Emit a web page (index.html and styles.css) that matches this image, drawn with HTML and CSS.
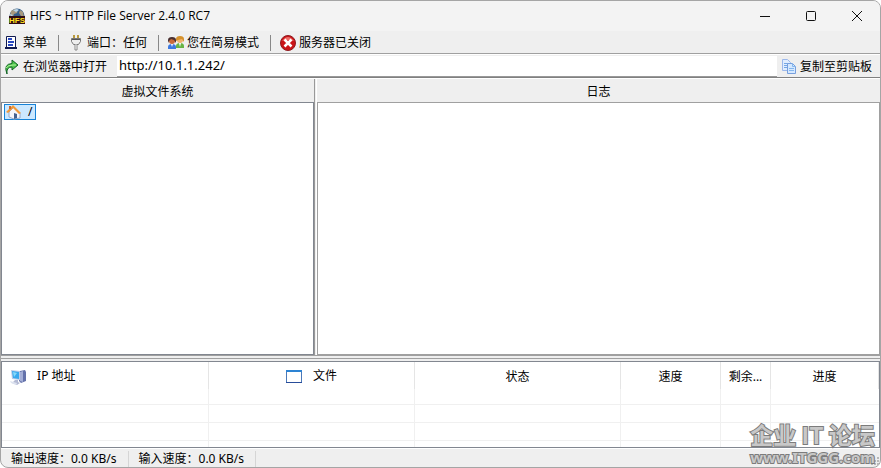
FILE: index.html
```html
<!DOCTYPE html>
<html lang="zh-CN">

<head>
    <meta charset="utf-8">
    <title>HFS ~ HTTP File Server 2.4.0 RC7</title>
    <meta name="viewport" content="width=device-width, initial-scale=1.0">
    <link rel="stylesheet" href="styles.css">
</head>

<body>
    <div class="window">
        <header class="titlebar">
            <svg width="18" height="16" viewBox="0 0 18 16">
                <circle cx="9" cy="8" r="7.500" fill="#35608c" />
                <path d="M3 3l4-2 3 1-1 3-3 1-1 3-3-1zM12 2l3 2 1 5-3-1-2-3z" fill="#a8997f" />
                <path d="M5 2l4-1 2 1-3 2zM2 6l3 1-2 2z" fill="#b7d5ed" />
                <path d="M1 8h16v8H1z" fill="#300c14" />
                <text x="9" y="15" text-anchor="middle" font-family="Liberation Sans, sans-serif" font-size="8" font-weight="bold" fill="#ffe020">HFS</text>
            </svg>
            <h1>HFS ~ HTTP File Server 2.4.0 RC7</h1>
            <div class="controls">
                <button type="button" aria-label="最小化"><svg width="12" height="12" viewBox="0 0 12 12"><path d="M1 6.500h10" /></svg></button>
                <button type="button" aria-label="最大化"><svg width="12" height="12" viewBox="0 0 12 12"><rect x="1.500" y="1.500" width="9" height="9" rx="1" /></svg></button>
                <button type="button" aria-label="关闭"><svg width="12" height="12" viewBox="0 0 12 12"><path d="M1 1l10 10M11 1L1 11" /></svg></button>
            </div>
        </header>

        <nav class="toolbar">
            <button type="button">
                <svg width="16" height="16" viewBox="0 0 16 16">
                    <path d="M2.500 1.500h9v11h-9z" fill="#fff" stroke="#111a50" />
                    <path d="M4 4h4M4 7h6M4 10h5" stroke="#2848c0" stroke-width="2" />
                    <path d="M1 13h12" stroke="#111a50" stroke-width="2" />
                </svg>
                菜单
            </button>
            <button type="button">
                <svg width="16" height="16" viewBox="0 0 16 16">
                    <path d="M6 0v4M10 0v4" stroke="#b99a3e" stroke-width="2" />
                    <path d="M3.500 3.500h9v3l-2 3h-5l-2-3z" fill="#eee" stroke="#777" />
                    <path d="M4 4h8v1H4z" fill="#555" />
                    <path d="M7 9.500v5.500h2V9.500" fill="#fff" stroke="#888" />
                </svg>
                端口：任何
            </button>
            <button type="button">
                <svg width="16" height="16" viewBox="0 0 16 16">
                    <path d="M0 14v-2q0-3 4-3t4 3v2z" fill="#3d79df" />
                    <path d="M8 13v-2q0-3 4-3t4 3v2z" fill="#68b445" />
                    <circle cx="4" cy="6" r="3" fill="#c86a3b" />
                    <path d="M0 8V5q0-3 4-3t4 3v3l-2-3-3-1-2 2z" fill="#4a3030" />
                    <circle cx="12" cy="5" r="3" fill="#f1b36d" />
                    <path d="M8 6V4q0-3 4-3t4 3v3l-2-3-4 1z" fill="#d6922c" />
                    <path d="M3 9l1 3 1-3M11 8l1 4 1-4" fill="#fff" />
                </svg>
                您在简易模式
            </button>
            <button type="button">
                <svg width="16" height="16" viewBox="0 0 16 16">
                    <circle cx="8" cy="8" r="7.500" fill="#ca1418" stroke="#8f1b20" />
                    <path d="M2 6q6-8 12 0-6-2-12 0z" fill="#ed6a66" />
                    <path d="M4.500 4.500l7 7M11.500 4.500l-7 7" stroke="#fff" stroke-width="2.500" />
                </svg>
                服务器已关闭
            </button>
        </nav>

        <div class="address">
            <button type="button">
                <svg width="16" height="16" viewBox="0 0 16 16">
                    <path d="M3 15Q-1 5 8 4.500V1l6 5-6 5V8Q2 8 3 15z" fill="#4cc44b" stroke="#126324" />
                    <path d="M2 9q2-3 7-3l3 0" fill="none" stroke="#b2f09f" />
                </svg>
                在浏览器中打开
            </button>
            <input type="text" value="http://10.1.1.242/" aria-label="URL">
            <button type="button">
                <svg width="16" height="16" viewBox="0 0 16 16">
                    <path d="M1.500.500h5l3 3v8h-8z" fill="#e0edff" stroke="#9cb8eb" />
                    <path d="M3 4.500h4M3 6.500h4M3 8.500h4" stroke="#75a7e5" />
                    <path d="M6.500 4.500h5l3 3v7h-8z" fill="#d5e8ff" stroke="#779fdd" />
                    <path d="M11.500 4.500v3h3M8 9.500h5M8 11.500h5" fill="none" stroke="#84b7ed" />
                </svg>
                复制至剪贴板
            </button>
        </div>

        <main class="panels">
            <section class="panel files">
                <h2>虚拟文件系统</h2>
                <div class="pane">
                    <a href="#" class="node">
                        <svg width="16" height="16" viewBox="0 0 16 16">
                            <path d="M3 8l5-5 6 6v5l-6 1-5-2z" fill="#f5f6fb" stroke="#99a8c6" />
                            <path d="M0 8l7-7 8 8-2 1-6-6-5 5z" fill="#f39a38" />
                            <path d="M3 2h2v3H3z" fill="#cc6930" />
                            <path d="M8 9l3 1v4l-3 1z" fill="#46628e" />
                        </svg>
                        <span>/</span>
                    </a>
                </div>
            </section>
            <section class="panel log">
                <h2>日志</h2>
                <div class="pane"></div>
            </section>
        </main>

        <div class="connections">
            <table>
                <colgroup>
                    <col class="ip">
                    <col class="file">
                    <col class="status">
                    <col class="speed">
                    <col class="left">
                    <col>
                </colgroup>
                <thead>
                    <tr>
                        <th class="first">
                            <svg width="16" height="16" viewBox="0 0 16 16">
                                <path d="M10 2l5-1 1 2v9l-5 2-2-2z" fill="#6472aa" />
                                <path d="M10 3l3-1v11l-3-1z" fill="#a4aed6" />
                                <path d="M1 1l9 1v9l-8-1z" fill="#bacae8" />
                                <path d="M2 2l7 1v7l-6-1z" fill="#39a9ee" />
                                <path d="M3 3l4 1-3 4z" fill="#86d8fa" />
                                <path d="M5 11l3 0v2l2 1-3 2-5-2z" fill="#b4bad4" />
                                <path d="M0 12l7 2-1 2-5-2z" fill="#dce2ef" />
                            </svg>
                            IP 地址
                        </th>
                        <th>
                            <svg width="16" height="16" viewBox="0 0 16 16">
                                <path d="M.500 1.500h15v12H.500z" fill="#fff" stroke="#4b79b9" />
                                <path d="M0 2h16" stroke="#2d83d3" stroke-width="2" />
                                <path d="M0 13.500h16" stroke="#294d9a" />
                            </svg>
                            文件
                        </th>
                        <th>状态</th>
                        <th>速度</th>
                        <th>剩余...</th>
                        <th>进度</th>
                    </tr>
                </thead>
                <tbody>
                    <tr><td></td><td></td><td></td><td></td><td></td><td></td></tr>
                    <tr><td></td><td></td><td></td><td></td><td></td><td></td></tr>
                    <tr><td></td><td></td><td></td><td></td><td></td><td></td></tr>
                    <tr class="rest"><td></td><td></td><td></td><td></td><td></td><td></td></tr>
                </tbody>
            </table>
        </div>

        <footer class="statusbar">
            <span>输出速度：0.0 KB/s</span>
            <span>输入速度：0.0 KB/s</span>
            <svg class="grip" width="10" height="10" viewBox="0 0 10 10">
                <path d="M7 0h2v2H7zM4 3h2v2H4zM7 3h2v2H7zM1 6h2v2H1zM4 6h2v2H4zM7 6h2v2H7z" fill="#b8b8b8" />
            </svg>
        </footer>

        <div class="watermark">
            <p class="forum">企业 IT 论坛</p>
            <p class="site">www.ITGGG.com</p>
        </div>
    </div>
</body>

</html>
```

FILE: styles.css
```css
* {
    box-sizing: border-box;
}

body {
    margin: 0;
    background-color: #fff;
    color: #000;
    font-family: "Noto Sans", "Noto Sans CJK SC", sans-serif;
    font-size: 12px;
    line-height: 16px;
}

svg {
    flex: none;
}

button {
    display: flex;
    align-items: center;
    gap: 3px;
    padding: 0;
    border: 0;
    background: none;
    color: inherit;
    font: inherit;
    white-space: nowrap;
}

h1,
h2,
p {
    margin: 0;
    font-size: 12px;
    font-weight: normal;
}

.window {
    position: relative;
    display: flex;
    flex-direction: column;
    min-height: 100vh;
    border: 1px solid #a5a5a5;
    border-radius: 8px;
    background-color: #efefef;
    overflow: hidden;
}

.titlebar {
    display: flex;
    align-items: center;
    height: 30px;
    padding-left: 7px;
    background-color: #f3f3f3;
}

.titlebar h1 {
    margin-left: 4px;
    font-family: "Open Sans", sans-serif;
}

.controls {
    display: flex;
    margin-left: auto;
}

.controls button {
    justify-content: center;
    width: 46px;
    height: 28px;
}

.controls svg {
    fill: none;
    stroke: #111;
}

.toolbar {
    display: flex;
    align-items: center;
    height: 23px;
    padding: 2px 0 0 3px;
    border-bottom: 1px solid #a0a0a0;
}

.toolbar button {
    height: 16px;
    padding-right: 11px;
}

.toolbar button + button {
    padding-left: 9px;
    border-left: 1px solid #888;
}

.address {
    display: flex;
    align-items: center;
    height: 24px;
    padding: 1px 8px 0 3px;
    border-top: 1px solid #fff;
    border-bottom: 1px solid #808080;
}

.address input {
    flex: 1;
    min-width: 0;
    height: 21px;
    margin: 0 4px 0 10px;
    padding: 0 2px 2px;
    border: 0;
    border-bottom: 1px solid #999;
    background-color: #fff;
    color: #000;
    font-family: "Noto Sans", sans-serif;
    font-size: 13px;
}

.panels {
    display: flex;
    flex: 1;
    gap: 1px;
    border-top: 1px solid #fff;
    border-bottom: 1px solid #a0a0a0;
}

.panel {
    display: flex;
    flex-direction: column;
}

.files {
    flex: 5;
    border-right: 1px solid #999;
}

.log {
    flex: 9;
    border-left: 1px solid #fff;
}

.panel h2 {
    padding: 5px 0 2px;
    text-align: center;
}

.pane {
    flex: 1;
    border: 1px solid #828790;
    background-color: #fff;
}

.log .pane {
    border-color: #a0a0a0;
}

.node {
    display: inline-flex;
    align-items: center;
    gap: 6px;
    height: 16px;
    margin: 1px 0 0 2px;
    padding: 0 3px 0 1px;
    border: 1px solid #1883d7;
    background-color: #cce8ff;
    color: #000;
    text-decoration: none;
}

.connections {
    margin-top: 2px;
    border-top: 1px solid #a0a0a0;
}

.connections table {
    width: 100%;
    margin-top: 2px;
    table-layout: fixed;
    border-collapse: separate;
    border-spacing: 0;
    border: 1px solid #828790;
    background-color: #fff;
}

.ip {
    width: 207px;
}

.file,
.status {
    width: 206px;
}

.speed {
    width: 100px;
}

.left {
    width: 50px;
}

.connections th {
    height: 27px;
    padding: 2px 0 0;
    border-right: 1px solid #e5e5e5;
    font-weight: normal;
    text-align: center;
}

.connections th svg {
    margin-right: 8px;
    vertical-align: middle;
}

.connections .first {
    padding-left: 8px;
    text-align: left;
}

.connections td {
    height: 18px;
    padding: 0;
    border-right: 1px solid #f0f0f0;
    border-bottom: 1px solid #f0f0f0;
}

.connections tr:first-child td {
    height: 16px;
}

.connections td:last-child {
    border-right: 0;
}

.connections .rest td {
    height: 6px;
    border-bottom: 0;
}

.statusbar {
    display: flex;
    height: 19px;
    padding-top: 2px;
    border-top: 1px solid #fff;
}

.statusbar span {
    padding: 0 11px 0 10px;
    border-right: 1px solid #d5d5d5;
}

.grip {
    align-self: flex-end;
    margin-left: auto;
}

.watermark {
    position: absolute;
    right: 5px;
    bottom: 0;
    color: #c8c8c8;
    text-align: center;
    -webkit-text-stroke: 2px #7c7c7c;
    paint-order: stroke fill;
}

.forum {
    font-family: "Noto Sans CJK SC", sans-serif;
    font-size: 23px;
    font-weight: bold;
    line-height: 26px;
}

.site {
    font-family: "Noto Sans", sans-serif;
    font-size: 15px;
    font-weight: bold;
    line-height: 20px;
}
```
